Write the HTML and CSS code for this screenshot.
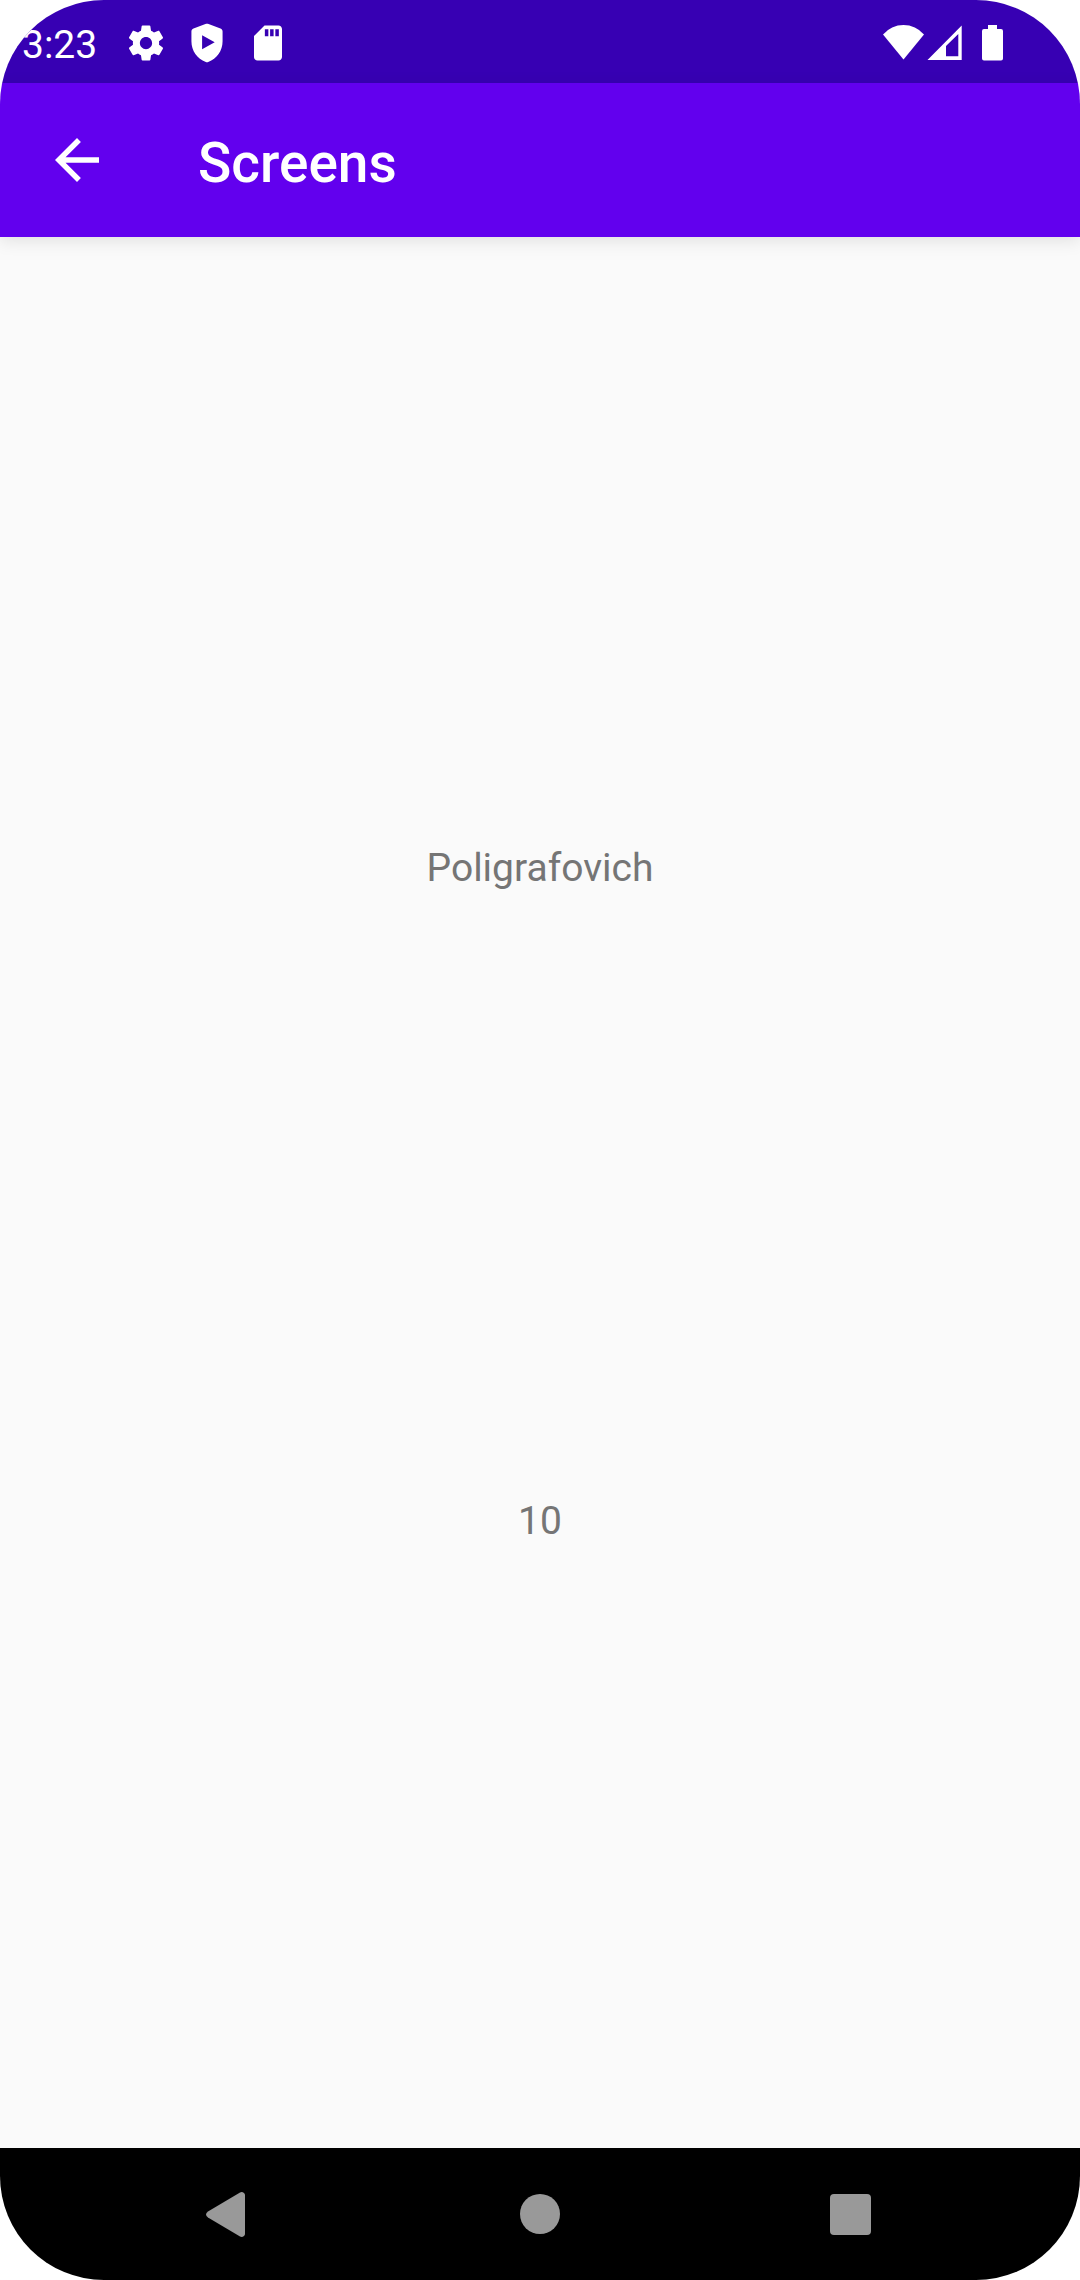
FILE: index.html
```html
<!DOCTYPE html>
<html lang="en">
<head>
  <meta charset="utf-8">
  <meta name="viewport" content="width=device-width, initial-scale=1">
  <title>Screens</title>
  <link rel="stylesheet" href="styles.css">
</head>
<body>
  <div class="device">
    <div class="status-bar">
      <time class="clock" datetime="03:23">3:23</time>
      <div class="notifications">
        <svg class="status-icon" viewBox="0 0 24 24" aria-hidden="true"><path d="M19.43 12.98c.04-.32.07-.64.07-.98s-.03-.66-.07-.98l2.11-1.65c.19-.15.24-.42.12-.64l-2-3.46c-.12-.22-.39-.3-.61-.22l-2.49 1c-.52-.4-1.08-.73-1.69-.98l-.38-2.65C14.46 2.18 14.25 2 14 2h-4c-.25 0-.46.18-.49.42l-.38 2.65c-.61.25-1.17.59-1.69.98l-2.49-1c-.23-.09-.49 0-.61.22l-2 3.46c-.13.22-.07.49.12.64l2.11 1.65c-.04.32-.07.65-.07.98s.03.66.07.98l-2.11 1.65c-.19.15-.24.42-.12.64l2 3.46c.12.22.39.3.61.22l2.49-1c.52.4 1.08.73 1.69.98l.38 2.65c.03.24.24.42.49.42h4c.25 0 .46-.18.49-.42l.38-2.65c.61-.25 1.17-.59 1.69-.98l2.49 1c.23.09.49 0 .61-.22l2-3.46c.12-.22.07-.49-.12-.64l-2.11-1.65zM12 15.5c-1.93 0-3.5-1.57-3.5-3.5s1.57-3.5 3.5-3.5 3.5 1.57 3.5 3.5-1.57 3.5-3.500 3.500z"/></svg>
        <svg class="status-icon" viewBox="0 0 24 24" aria-hidden="true"><path fill-rule="evenodd" d="M12 1c.3 0 .6.1.9.2l6.800 2.500c.8.3 1.200.9 1.200 1.700V11c0 5.500-3.300 10-8.200 11.900-.5.2-.9.2-1.400 0C6.400 21 3.100 16.500 3.100 11V5.400c0-.8.400-1.400 1.200-1.700l6.800-2.500c.3-.1.600-.2.900-.2zM9.200 7.600v8l7.200-4z"/></svg>
        <svg class="status-icon" viewBox="0 0 24 24" aria-hidden="true"><path fill-rule="evenodd" d="M18 2h-8L4 8v12c0 1.100.9 2 2 2h12c1.100 0 2-.9 2-2V4c0-1.100-.9-2-2-2zM10.200 4.200h2v4h-2zm3 0h2v4h-2zm3 0h2v4h-2z"/></svg>
      </div>
      <div class="system">
        <svg class="status-icon" viewBox="0 0 42 42" aria-hidden="true"><path d="M21.500 37.500 1 12.500A27 27 0 0 1 42 12.500z"/></svg>
        <svg class="status-icon" viewBox="0 0 42 42" aria-hidden="true"><path fill-rule="evenodd" d="M3.500 38H37.700V3.500zM22 24 34.300 12V34.300H22z"/></svg>
        <svg class="status-icon battery" viewBox="0 0 42 42" aria-hidden="true"><path d="M16 3h9v4h4q2 0 2 2v27.500q0 2-2 2H12q-2 0-2-2V9q0-2 2-2h4z"/></svg>
      </div>
    </div>

    <header class="app-bar">
      <button class="icon-button" type="button" aria-label="Navigate up">
        <svg class="icon" viewBox="0 0 24 24" aria-hidden="true"><path d="M20 11H7.830l5.590-5.590L12 4l-8 8 8 8 1.410-1.410L7.830 13H20v-2z"/></svg>
      </button>
      <h1 class="title">Screens</h1>
    </header>

    <main class="content">
      <p class="label">Poligrafovich</p>
      <p class="label">10</p>
    </main>

    <nav class="nav-bar" aria-label="System navigation">
      <button class="icon-button" type="button" aria-label="Back">
        <svg class="icon" viewBox="0 0 66 66" aria-hidden="true"><path d="M11 30.500 43 11.500q2-1 4 .5 1 1 1 2v39q0 1-1 2-2 1.500-4 .5L11 36.500q-4-3 0-6z"/></svg>
      </button>
      <button class="icon-button" type="button" aria-label="Home">
        <svg class="icon" viewBox="0 0 66 66" aria-hidden="true"><circle cx="33" cy="33" r="20"/></svg>
      </button>
      <button class="icon-button" type="button" aria-label="Overview">
        <svg class="icon" viewBox="0 0 66 66" aria-hidden="true"><rect x="13" y="13" width="41" height="41" rx="4"/></svg>
      </button>
    </nav>
  </div>
</body>
</html>
```
FILE: styles.css
```css
* {
  box-sizing: border-box;
}

body {
  margin: 0;
  background: #fff;
  font-family: Roboto, sans-serif;
}

.device {
  display: flex;
  flex-direction: column;
  min-height: 100vh;
  border-radius: 104px;
  overflow: hidden;
  background: #fafafa;
}

.status-bar {
  display: flex;
  align-items: center;
  height: 83px;
  padding: 2px 66px 0 22px;
  background: #3700b3;
  color: #fff;
}

.clock {
  padding-top: 4px;
  font-size: 39px;
  line-height: 48px;
}

.notifications {
  display: flex;
  gap: 19px;
  margin-left: 28px;
}

.system {
  display: flex;
  margin-left: auto;
}

.status-icon {
  width: 42px;
  height: 42px;
  fill: currentColor;
}

.battery {
  margin-left: 6px;
}

.app-bar {
  display: flex;
  align-items: center;
  gap: 88px;
  height: 154px;
  padding: 0 44px;
  background: #6200ee;
  color: #fff;
  box-shadow: 0 4px 16px rgba(0, 0, 0, 0.1);
}

.icon-button {
  display: flex;
  align-items: center;
  justify-content: center;
  padding: 0;
  border: 0;
  background: none;
  color: inherit;
}

.icon {
  width: 66px;
  height: 66px;
  fill: currentColor;
}

.title {
  margin: 0;
  padding-top: 6px;
  font-size: 55px;
  font-weight: 500;
  line-height: 64px;
}

.content {
  flex: 1;
  display: flex;
  flex-direction: column;
  align-items: center;
  justify-content: space-evenly;
  padding-top: 4px;
}

.label {
  margin: 0;
  color: #757575;
  font-size: 39px;
  line-height: 52px;
}

.nav-bar {
  display: grid;
  grid-template-columns: repeat(3, 1fr);
  height: 132px;
  padding: 0 7%;
  background: #000;
  color: #999;
}
```
